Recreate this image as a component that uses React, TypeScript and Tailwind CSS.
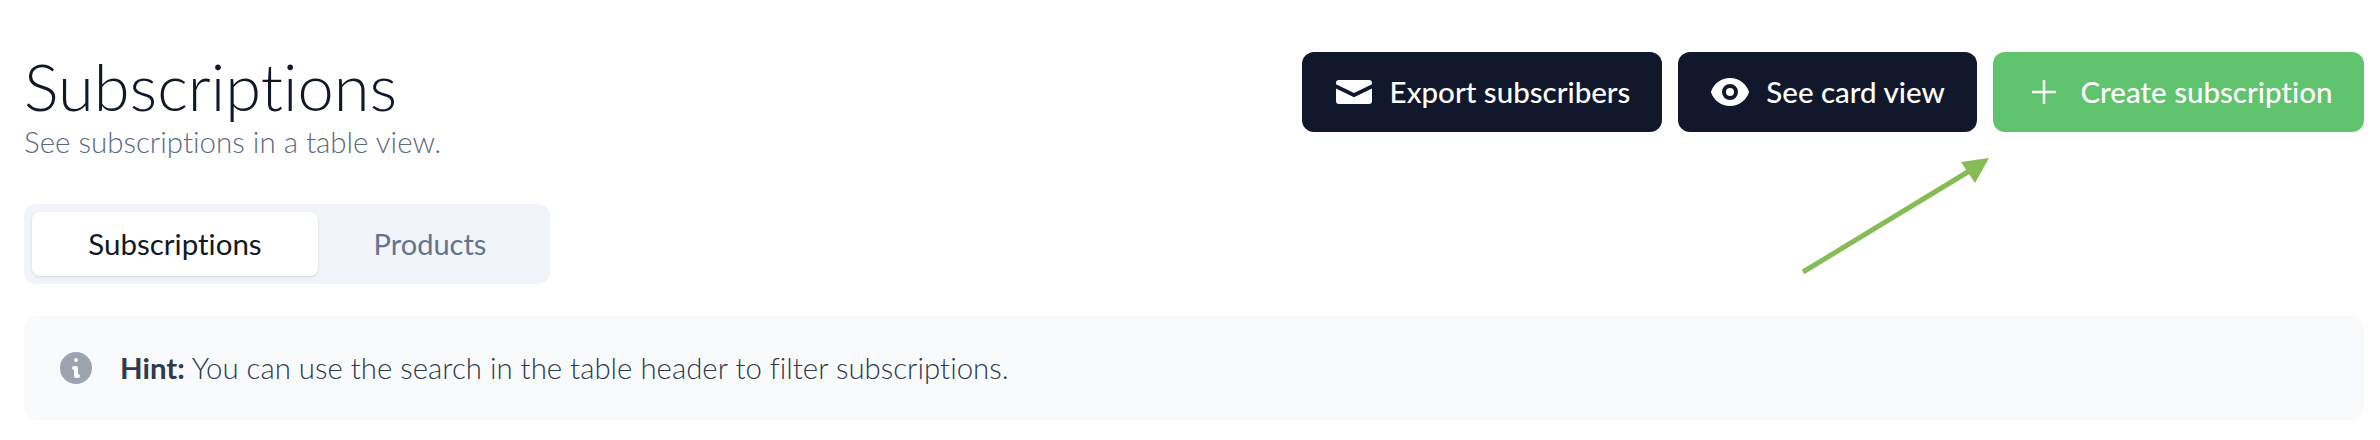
const font = "font-['Lato','Noto_Sans',sans-serif] [font-variant-ligatures:none]";

function MailIcon() {
  return (
    <svg width="36" height="24" viewBox="0 0 36 24" fill="white" className="shrink-0">
      <path d="M0 4.2 18 13 36 4.2V3a3 3 0 0 0-3-3H3a3 3 0 0 0-3 3z" />
      <path d="M0 8.4V21a3 3 0 0 0 3 3h30a3 3 0 0 0 3-3V8.4L18 17.2z" />
    </svg>
  );
}

function EyeIcon() {
  return (
    <svg width="40" height="40" viewBox="0 0 20 20" fill="white" className="shrink-0">
      <path d="M10 12a2 2 0 100-4 2 2 0 000 4z" />
      <path fillRule="evenodd" clipRule="evenodd" d="M.458 10C1.732 5.943 5.522 3 10 3s8.268 2.943 9.542 7c-1.274 4.057-5.064 7-9.542 7S1.732 14.057.458 10zM14 10a4 4 0 11-8 0 4 4 0 018 0z" />
    </svg>
  );
}

function PlusIcon() {
  return (
    <svg width="24" height="24" viewBox="0 0 24 24" stroke="white" strokeWidth="2.5" fill="none" className="shrink-0">
      <path d="M12 0v24M0 12h24" />
    </svg>
  );
}

function InfoIcon() {
  return (
    <svg width="40" height="40" viewBox="0 0 20 20" fill="#9ca3af" className="shrink-0">
      <path fillRule="evenodd" clipRule="evenodd" d="M18 10a8 8 0 11-16 0 8 8 0 0116 0zm-7-4a1 1 0 11-2 0 1 1 0 012 0zM9 9a1 1 0 000 2v3a1 1 0 001 1h1a1 1 0 100-2v-3a1 1 0 00-1-1H9z" />
    </svg>
  );
}

function Arrow() {
  return (
    <svg width="190" height="120" viewBox="0 0 190 120" className="absolute left-[1801px] top-[156px]">
      <path d="M2 116 L170 14" stroke="#86bc58" strokeWidth="5" fill="none" />
      <path d="M188 2 L160 6 L174 27 Z" fill="#86bc58" />
    </svg>
  );
}

export default function App() {
  return (
    <div className={`relative h-[440px] w-[2380px] bg-white pt-[52px] pr-4 pl-6 ${font}`}>
      <div className="flex h-[152px] items-start justify-between">
        <div>
          <h1 className="mt-[1px] text-[65px] leading-[66px] font-light text-[#111827]">Subscriptions</h1>
          <p className="mt-[8px] text-[29.5px] leading-[30px] font-light text-[#5b6b85]">See subscriptions in a table view.</p>
        </div>
        <div className="flex gap-4">
          <button className="flex h-20 w-[360px] items-center justify-center gap-[18px] rounded-xl bg-[#12182b] pl-[2px] text-[29.5px] font-medium text-white">
            <MailIcon />
            Export subscribers
          </button>
          <button className="flex h-20 w-[299px] items-center justify-center gap-[16px] rounded-xl bg-[#12182b] text-[29.5px] font-medium text-white">
            <EyeIcon />
            See card view
          </button>
          <button className="flex h-20 w-[371px] items-center justify-center gap-[24px] rounded-xl bg-[#5fc46d] pl-[8px] text-[29.5px] font-medium text-white">
            <PlusIcon />
            Create subscription
          </button>
        </div>
      </div>

      <div className="flex h-20 w-[526px] items-center rounded-xl bg-[#f1f5f9] p-2">
        <div className="flex h-16 w-[286px] items-center justify-center rounded-lg bg-white text-[29.5px] text-[#111827] shadow-sm">
          Subscriptions
        </div>
        <div className="flex h-16 flex-1 items-center justify-center text-[29px] text-[#64748b]">Products</div>
      </div>

      <div className="mt-8 flex h-[104px] items-center gap-[24px] rounded-xl bg-[#f8fafc] pl-[32px]">
        <InfoIcon />
        <p className="text-[29.4px] font-light text-[#2f3a4c]">
          <span className="font-bold">Hint:</span> You can use the search in the table header to filter subscriptions.
        </p>
      </div>

      <Arrow />
    </div>
  );
}
